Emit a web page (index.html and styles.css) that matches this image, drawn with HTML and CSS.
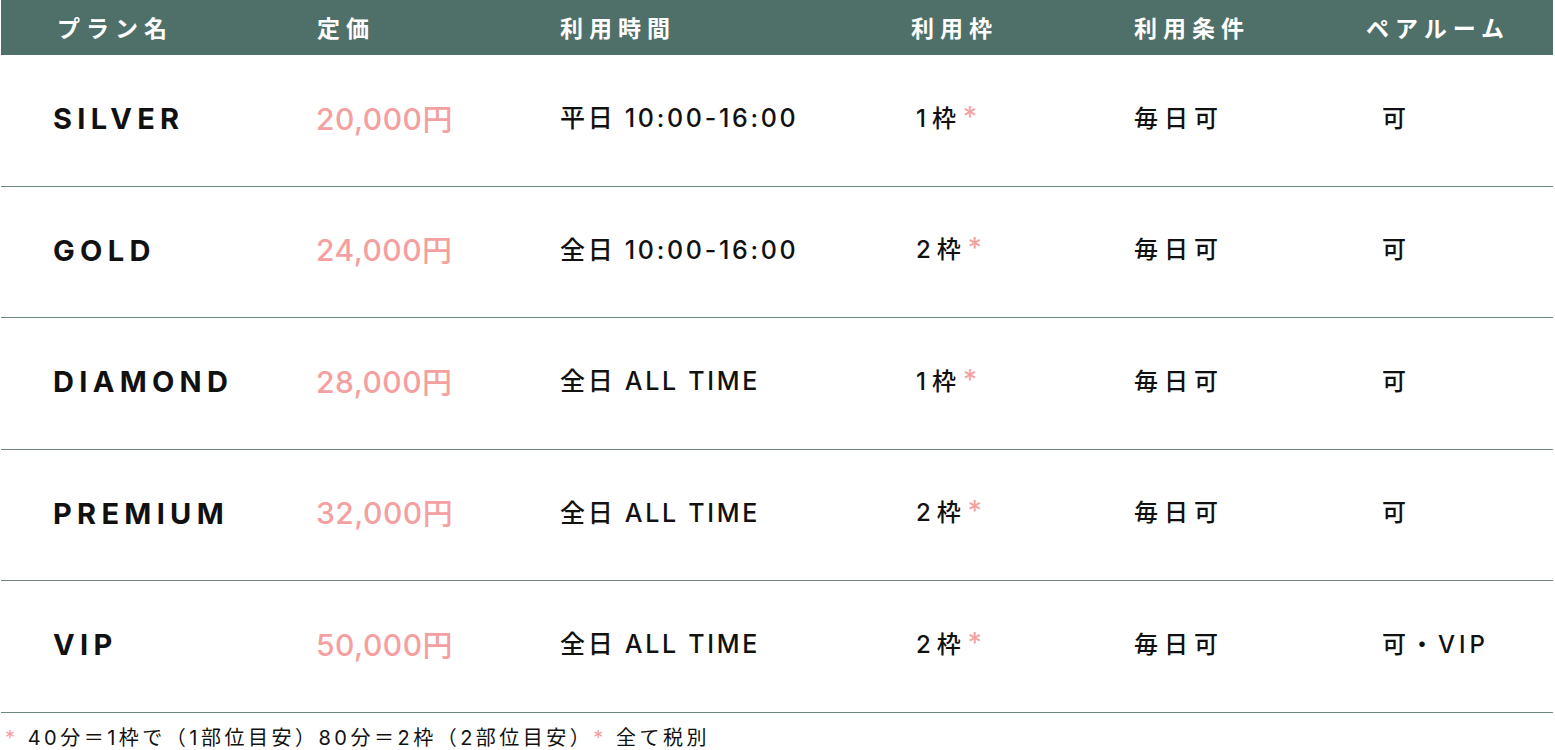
FILE: index.html
```html
<!DOCTYPE html>
<html lang="ja">
<head>
<meta charset="utf-8">
<title>料金プラン</title>
<link rel="stylesheet" href="styles.css">
</head>
<body>
<div class="plans">
  <div class="head">
    <div class="hc h1">プラン名</div>
    <div class="hc h2">定価</div>
    <div class="hc h3">利用時間</div>
    <div class="hc h4">利用枠</div>
    <div class="hc h5">利用条件</div>
    <div class="hc h6">ペアルーム</div>
  </div>
  <div class="row">
    <div class="c name">SILVER</div>
    <div class="c price">20,000円</div>
    <div class="c time">平日 10:00-16:00</div>
    <div class="c slot">1枠<span class="ast">*</span></div>
    <div class="c cond">毎日可</div>
    <div class="c pair">可</div>
  </div>
  <div class="row">
    <div class="c name">GOLD</div>
    <div class="c price">24,000円</div>
    <div class="c time">全日 10:00-16:00</div>
    <div class="c slot">2枠<span class="ast">*</span></div>
    <div class="c cond">毎日可</div>
    <div class="c pair">可</div>
  </div>
  <div class="row">
    <div class="c name">DIAMOND</div>
    <div class="c price">28,000円</div>
    <div class="c time">全日 ALL TIME</div>
    <div class="c slot">1枠<span class="ast">*</span></div>
    <div class="c cond">毎日可</div>
    <div class="c pair">可</div>
  </div>
  <div class="row">
    <div class="c name">PREMIUM</div>
    <div class="c price">32,000円</div>
    <div class="c time">全日 ALL TIME</div>
    <div class="c slot">2枠<span class="ast">*</span></div>
    <div class="c cond">毎日可</div>
    <div class="c pair">可</div>
  </div>
  <div class="row">
    <div class="c name">VIP</div>
    <div class="c price">50,000円</div>
    <div class="c time">全日 ALL TIME</div>
    <div class="c slot">2枠<span class="ast">*</span></div>
    <div class="c cond">毎日可</div>
    <div class="c pair">可・VIP</div>
  </div>
  <p class="note"><span class="nast">*</span> 40分＝1枠で（1部位目安）80分＝2枠（2部位目安）<span class="nast">*</span> 全て税別</p>
</div>
</body>
</html>
```

FILE: styles.css
```css
html, body {
  margin: 0;
  padding: 0;
  background: #ffffff;
}
body {
  font-family: Inter, "Noto Sans CJK JP", "Noto Sans", sans-serif;
  color: #111111;
}
.plans {
  width: 1552px;
  margin-left: 1px;
}
.head, .row {
  display: grid;
  grid-template-columns: 263px 244px 351px 223px 248px 223px;
  align-items: center;
}
.head {
  height: 55px;
  background: #4f7068;
  color: #ffffff;
  font-family: "Noto Sans CJK JP", sans-serif;
}
.hc {
  font-size: 23px;
  font-weight: 700;
  letter-spacing: 6px;
  line-height: 1;
}
.h1 { padding-left: 56px; }
.h2 { padding-left: 53px; }
.h3 { padding-left: 52px; }
.h4 { padding-left: 52px; }
.h5 { padding-left: 52px; }
.h6 { padding-left: 36px; }
.row {
  box-sizing: border-box;
  height: 131.5px;
  padding-bottom: 3px;
  border-bottom: 1px solid #6d8782;
}
.c {
  padding-left: 52px;
  line-height: 1;
  font-weight: 500;
}
.name {
  font-size: 29px;
  font-weight: 700;
  letter-spacing: 5.3px;
}
.price {
  font-size: 30px;
  font-weight: 500;
  color: #f5a0a0;
  letter-spacing: 0.5px;
}
.time {
  font-size: 25px;
  font-weight: 500;
  letter-spacing: 2.7px;
}
.slot {
  padding-left: 57px;
  font-size: 24px;
  letter-spacing: 6px;
}
.ast {
  color: #f5a0a0;
  font-size: 28px;
  font-weight: 400;
  line-height: 0;
  vertical-align: 0;
  margin-left: 1px;
  letter-spacing: 0;
}
.cond {
  font-size: 24px;
  letter-spacing: 6px;
}
.pair {
  font-size: 24px;
  letter-spacing: 4px;
}
.note {
  margin: 12px 0 0 4px;
  font-size: 20px;
  font-weight: 400;
  line-height: 1.3;
  letter-spacing: 3.5px;
  color: #111111;
}
.nast {
  color: #f5a0a0;
}
```
